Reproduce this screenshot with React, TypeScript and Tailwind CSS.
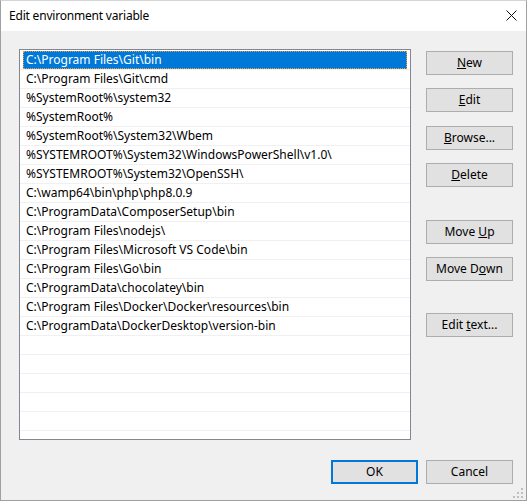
import React from 'react';

const paths = [
  'C:\\Program Files\\Git\\bin',
  'C:\\Program Files\\Git\\cmd',
  '%SystemRoot%\\system32',
  '%SystemRoot%',
  '%SystemRoot%\\System32\\Wbem',
  '%SYSTEMROOT%\\System32\\WindowsPowerShell\\v1.0\\',
  '%SYSTEMROOT%\\System32\\OpenSSH\\',
  'C:\\wamp64\\bin\\php\\php8.0.9',
  'C:\\ProgramData\\ComposerSetup\\bin',
  'C:\\Program Files\\nodejs\\',
  'C:\\Program Files\\Microsoft VS Code\\bin',
  'C:\\Program Files\\Go\\bin',
  'C:\\ProgramData\\chocolatey\\bin',
  'C:\\Program Files\\Docker\\Docker\\resources\\bin',
  'C:\\ProgramData\\DockerDesktop\\version-bin',
];

const rows = [...paths, ...Array(8).fill('')];

const Btn: React.FC<{ className?: string; primary?: boolean; children: React.ReactNode }> = ({
  className = '',
  primary,
  children,
}) => (
  <button
    className={`flex items-center justify-center w-[87px] h-[24px] bg-[#e1e1e1] text-[12px] text-black ${
      primary ? 'border-2 border-[#0078d7]' : 'border border-[#adadad]'
    } ${className}`}
  >
    {children}
  </button>
);

export default function App() {
  return (
    <div
      className="relative w-[527px] h-[501px] bg-[#f0f0f0] border border-[#a0a0a0] border-t-[#d4d4d4] flex flex-col overflow-hidden"
      style={{ fontFamily: '"Noto Sans", "Liberation Sans", sans-serif' }}
    >
      {/* title bar */}
      <div className="h-[30px] bg-white flex items-center justify-between pl-[8px] pr-[9px] shrink-0">
        <span className="text-[12px] text-black leading-none tracking-[-0.2px]">Edit environment variable</span>
        <svg width="11" height="11" viewBox="0 0 11 11" className="mb-[1px]">
          <path d="M0.5 0.5 L10.5 10.5 M10.5 0.5 L0.5 10.5" stroke="#111" strokeWidth="1" />
        </svg>
      </div>

      {/* body */}
      <div className="flex pl-[18px] pt-[18px]">
        <div className="w-[392px] h-[391px] bg-white border border-[#828790] pt-[1px] overflow-hidden">
          {rows.map((p, i) => (
            <div key={i} className="h-[19px] border-b border-[#f0f0f0] px-[3px]">
              {i === 0 ? (
                <div className="h-[18px] bg-[#0078d7] text-white outline outline-1 outline-dotted outline-[#f29e3c] -outline-offset-1 flex items-center pl-[3px] text-[12px] leading-none">
                  {p}
                </div>
              ) : (
                <div className="h-[18px] flex items-center pl-[3px] text-[12px] leading-none text-black">{p}</div>
              )}
            </div>
          ))}
        </div>

        <div className="flex flex-col pl-[15px] pt-[2px]">
          <Btn>
            <u>N</u>ew
          </Btn>
          <Btn className="mt-[13px]">
            <u>E</u>dit
          </Btn>
          <Btn className="mt-[14px]">
            <u>B</u>rowse...
          </Btn>
          <Btn className="mt-[13px]">
            <u>D</u>elete
          </Btn>
          <Btn className="mt-[33px]">
            Move&nbsp;<u>U</u>p
          </Btn>
          <Btn className="mt-[13px]">
            Move D<u>o</u>wn
          </Btn>
          <Btn className="mt-[32px]">
            Edit&nbsp;<u>t</u>ext...
          </Btn>
        </div>
      </div>

      {/* footer */}
      <div className="flex justify-end gap-[8px] pr-[13px] mt-[20px]">
        <Btn primary className="w-[86px]">
          OK
        </Btn>
        <Btn>Cancel</Btn>
      </div>

      {/* size grip */}
      <div className="absolute right-[3px] bottom-[2px] grid grid-cols-3 gap-[2px]">
        <span className="w-[2px] h-[2px]" />
        <span className="w-[2px] h-[2px]" />
        <span className="w-[2px] h-[2px] bg-[#bfbfbf]" />
        <span className="w-[2px] h-[2px]" />
        <span className="w-[2px] h-[2px] bg-[#bfbfbf]" />
        <span className="w-[2px] h-[2px] bg-[#bfbfbf]" />
        <span className="w-[2px] h-[2px] bg-[#bfbfbf]" />
        <span className="w-[2px] h-[2px] bg-[#bfbfbf]" />
        <span className="w-[2px] h-[2px] bg-[#bfbfbf]" />
      </div>
    </div>
  );
}
